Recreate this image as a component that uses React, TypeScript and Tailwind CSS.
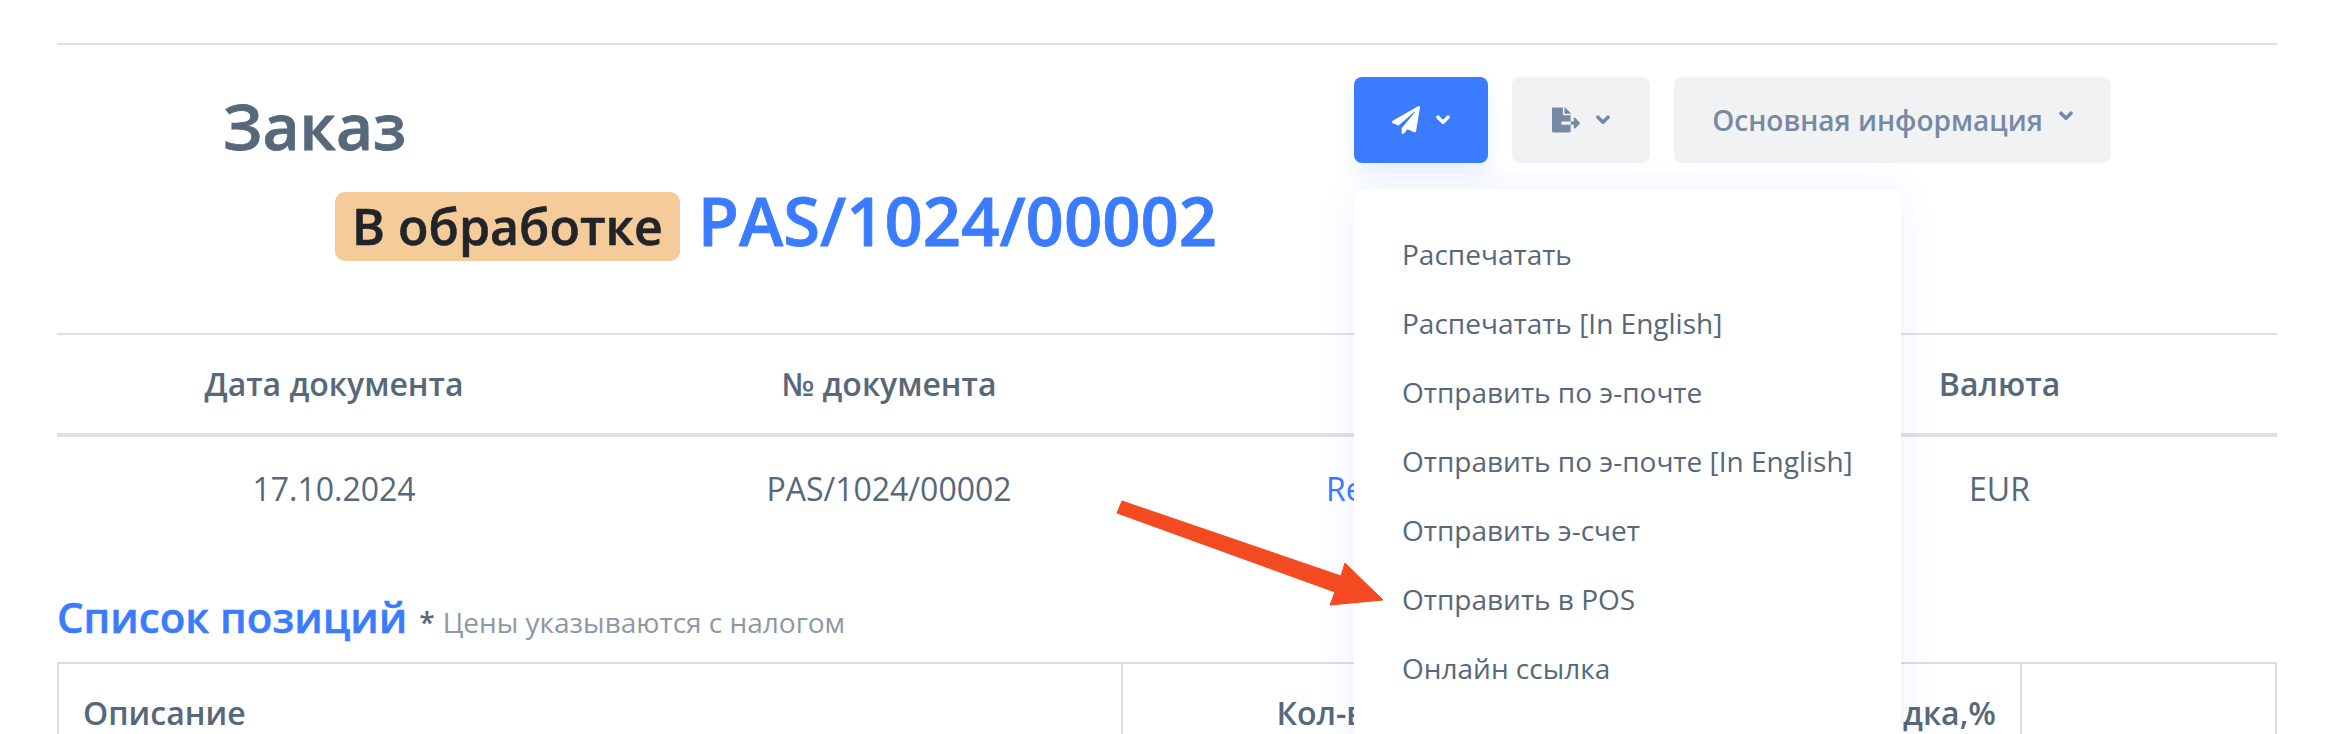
import { FaFileExport, FaPaperPlane } from "react-icons/fa";

const menuItems = [
  "Распечатать",
  "Распечатать [In English]",
  "Отправить по э-почте",
  "Отправить по э-почте [In English]",
  "Отправить э-счет",
  "Отправить в POS",
  "Онлайн ссылка",
];

const Chevron = ({ className = "" }: { className?: string }) => (
  <svg className={className} width="14" height="10" viewBox="0 0 14 10" fill="none">
    <path d="M2 2.2 7 7.2 12 2.2" stroke="currentColor" strokeWidth="3.6" strokeLinecap="round" strokeLinejoin="round" />
  </svg>
);

const App = () => {
  return (
    <div className="relative h-[734px] w-[2340px] overflow-hidden bg-white pt-[43px] pr-[63px] pl-[57px] font-['Open_Sans','Noto_Sans',sans-serif] text-[#56687a]">
      {/* title block */}
      <section className="flex h-[292px] border-y-2 border-[#e0e0e0]">
        <div className="w-[1297px] pt-[37px]">
          <h1 className="pl-[166px] text-[64px] leading-[88px] font-semibold [-webkit-text-stroke:0.8px_#56687a]">Заказ</h1>
          <div className="mt-[16px] flex items-center pl-[278px]">
            <span className="rounded-[10px] bg-[#f5cb9a] px-[17px] text-[50px] leading-[69px] font-semibold text-[#212529] [-webkit-text-stroke:0.6px_#212529]">
              В обработке
            </span>
            <span className="mb-[12px] ml-[18px] text-[67px] leading-[69px] font-semibold text-[#3a7bff] [-webkit-text-stroke:0.8px_#3a7bff]">
              PAS/1024/00002
            </span>
          </div>
        </div>
        <div className="flex gap-[24px] pt-[32px]">
          <button className="flex h-[86px] w-[134px] items-center justify-center gap-[16px] rounded-[8px] bg-[#3a7bff] text-white shadow-[0_10px_20px_rgba(58,123,255,0.12)]">
            <FaPaperPlane className="text-[28px]" />
            <Chevron />
          </button>
          <button className="flex h-[86px] w-[138px] items-center justify-center gap-[16px] rounded-[8px] bg-[#f1f2f4] text-[#778aa3]">
            <FaFileExport className="text-[28px]" />
            <Chevron />
          </button>
          <button className="flex h-[86px] w-[437px] items-center justify-center gap-[16px] rounded-[8px] bg-[#f1f2f4] text-[28px] font-semibold text-[#778aa3]">
            Основная информация
            <Chevron className="mb-[8px]" />
          </button>
        </div>
      </section>

      {/* document info */}
      <section className="grid grid-cols-[554px_556px_555px_555px] text-center text-[32px]">
        <div className="flex h-[102px] items-center justify-center border-b-4 border-[#e0e0e0] font-semibold">Дата документа</div>
        <div className="flex h-[102px] items-center justify-center border-b-4 border-[#e0e0e0] font-semibold">№ документа</div>
        <div className="h-[102px] border-b-4 border-[#e0e0e0]"></div>
        <div className="flex h-[102px] items-center justify-center border-b-4 border-[#e0e0e0] font-semibold">Валюта</div>
        <div className="pt-[30px] leading-[44px]">17.10.2024</div>
        <div className="pt-[30px] leading-[44px]">PAS/1024/00002</div>
        <div className="pt-[30px] pl-[159px] text-left leading-[44px] text-[#3a7bff]">Re</div>
        <div className="pt-[30px] leading-[44px]">EUR</div>
      </section>

      {/* positions */}
      <h2 className="mt-[75px] flex h-[62px] items-baseline text-[42px] leading-[62px] font-semibold text-[#3a7bff] [-webkit-text-stroke:0.5px_#3a7bff]">
        Список позиций
        <span className="ml-[12px] text-[28px] font-semibold text-[#56687a] [-webkit-text-stroke:0]">*</span>
        <span className="ml-[8px] text-[28px] font-normal text-[#8c98a4] [-webkit-text-stroke:0]">Цены указываются с налогом</span>
      </h2>
      <div className="mt-[14px] grid h-[120px] grid-cols-[1064px_288px_312px_299px_253px] border-x-2 border-t-2 border-[#dcdcdc] text-[32px] font-semibold">
        <div className="border-r-2 border-[#dcdcdc] pt-[25px] pl-[24px]">Описание</div>
        <div className="border-r-2 border-[#dcdcdc] pt-[25px] pr-[24px] text-right">Кол-во</div>
        <div className="border-r-2 border-[#dcdcdc] pt-[25px] pr-[24px] text-right">Цена</div>
        <div className="border-r-2 border-[#dcdcdc] pt-[25px] pr-[24px] text-right">Скидка,%</div>
        <div></div>
      </div>

      {/* send menu */}
      <ul className="absolute top-[189px] left-[1354px] h-[600px] w-[547px] rounded-[10px] bg-white pt-[30px] text-[28px] shadow-[0_0_36px_rgba(70,90,255,0.09)]">
        {menuItems.map((item) => (
          <li key={item} className="flex h-[69px] items-center pl-[48px]">
            {item}
          </li>
        ))}
      </ul>

      {/* annotation arrow */}
      <svg className="absolute top-0 left-0" width="2340" height="734" viewBox="0 0 2340 734">
        <polygon
          points="1122,501 1117,513 1335,592 1330,605 1383,600 1345,563 1341,576"
          fill="#f44a22"
          stroke="#f44a22"
          strokeWidth="1"
          strokeLinejoin="round"
        />
      </svg>
    </div>
  );
};

export default App;
